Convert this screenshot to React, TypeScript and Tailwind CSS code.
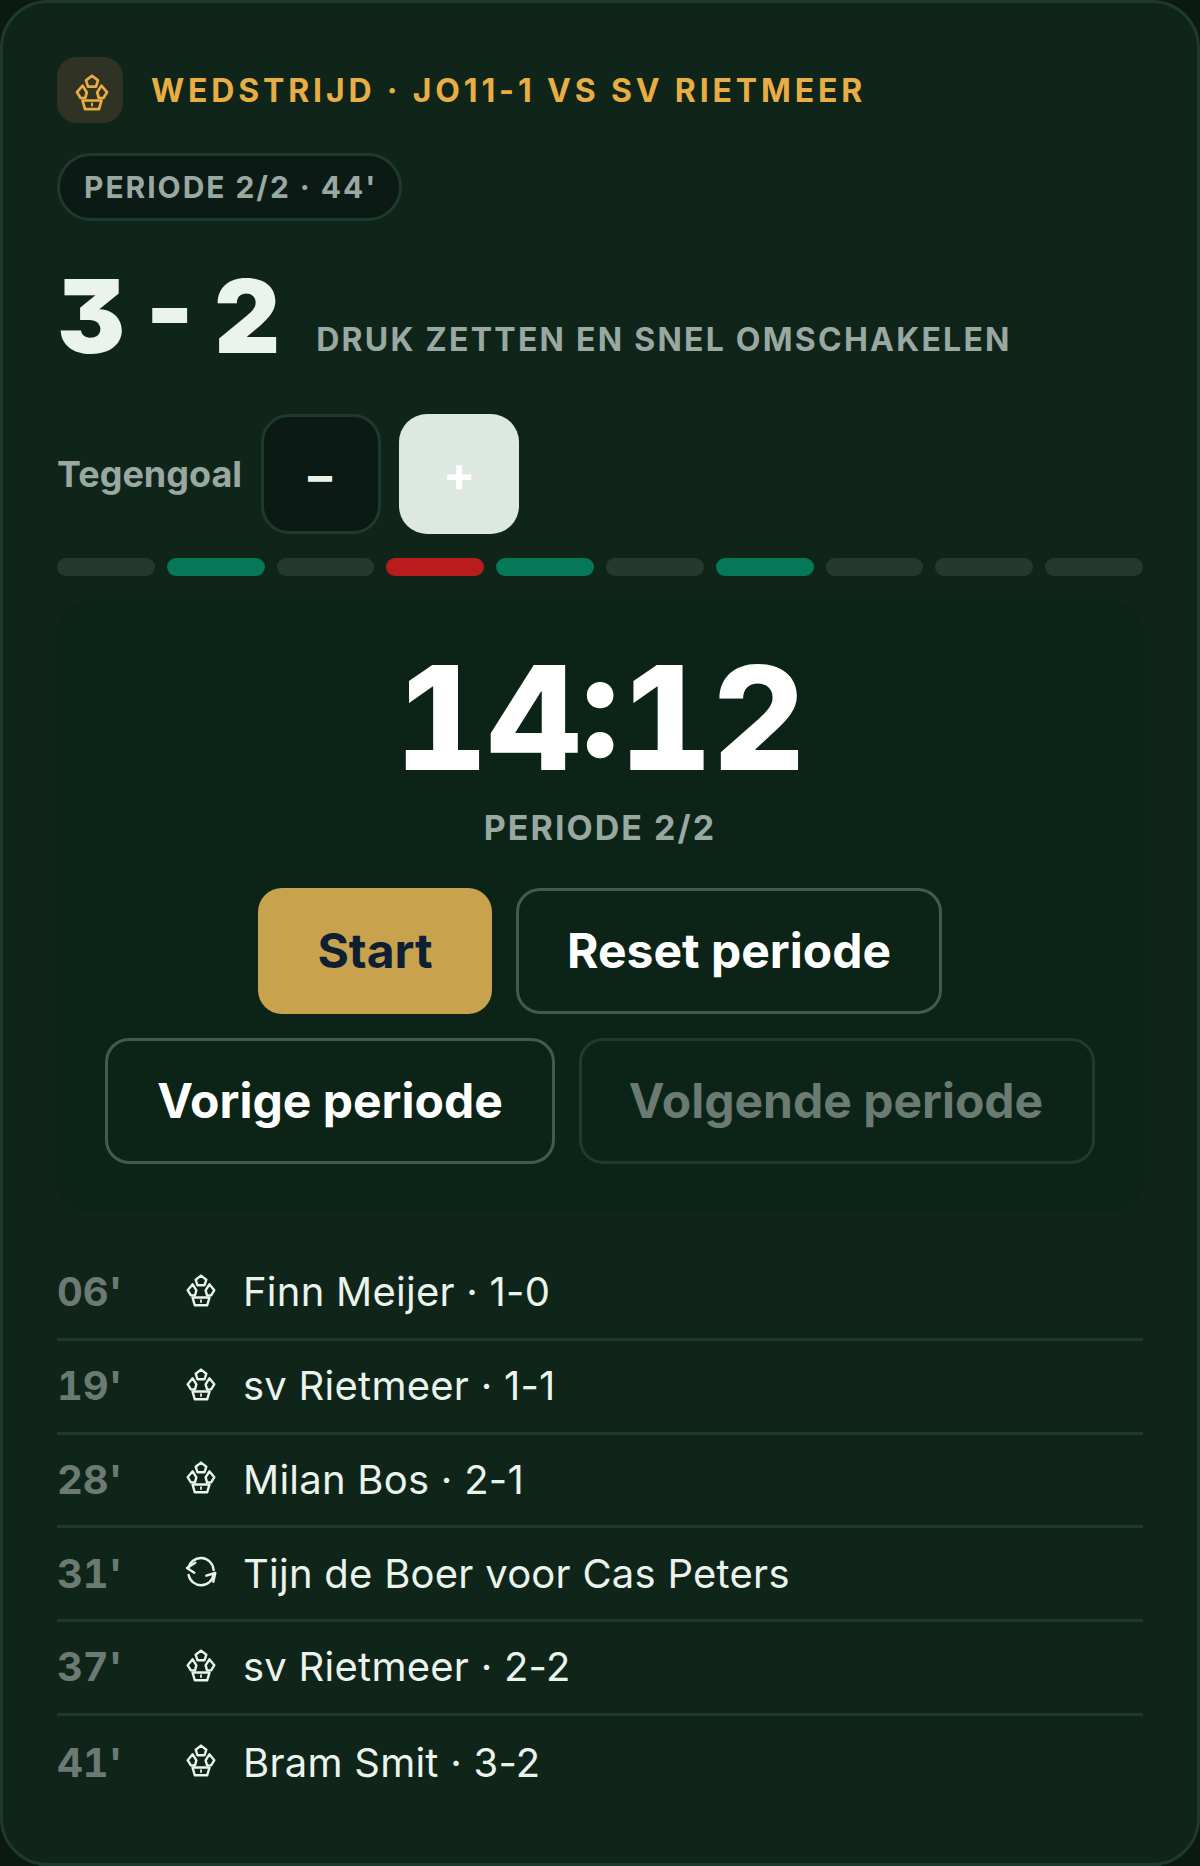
const Ball = ({ className }: { className: string }) => (
  <svg viewBox="0 0 36 38" fill="none" stroke="currentColor" strokeWidth="2.7" strokeLinejoin="round" strokeLinecap="round" className={className}>
    <path d="M18 2.8 24 7.4 22 13.6H14L12 7.4Z" />
    <path d="M8.6 12.6 12.8 19.5 11.2 25H6.6L3 19.2Z" />
    <path d="M27.4 12.6 23.2 19.5 24.8 25H29.4L33 19.2Z" />
    <path d="M8.5 27.5H15M21 27.5H27.5L25 36.2H11L8.5 27.5Z" />
    <path d="M18 30.5V32.5" strokeWidth="2" />
  </svg>
);

const Swap = ({ className }: { className: string }) => (
  <svg viewBox="0 0 32 32" fill="none" stroke="currentColor" strokeWidth="2.4" strokeLinejoin="round" strokeLinecap="round" className={className}>
    <path d="M3.4 12.6A12.7 12.7 0 0 1 28.6 14" />
    <path d="M28.6 18.5A12.7 12.7 0 0 1 3.6 19" />
    <path d="M10.3 6.7 2 12l7.3 4.7" />
    <path d="M21.3 19.7 30.3 17l-2 8.7" />
  </svg>
);

const bars = ["bg-[#243a30]", "bg-[#047857]", "bg-[#243a30]", "bg-[#b91c1c]", "bg-[#047857]", "bg-[#243a30]", "bg-[#047857]", "bg-[#243a30]", "bg-[#243a30]", "bg-[#243a30]"];

const events = [
  { t: "06'", e: "Finn Meijer · 1-0", swap: false },
  { t: "19'", e: "sv Rietmeer · 1-1", swap: false },
  { t: "28'", e: "Milan Bos · 2-1", swap: false },
  { t: "31'", e: "Tijn de Boer voor Cas Peters", swap: true },
  { t: "37'", e: "sv Rietmeer · 2-2", swap: false },
  { t: "41'", e: "Bram Smit · 3-2", swap: false },
];

export default function App() {
  return (
    <div className="w-[1200px] h-[1866px] bg-[#0a1a13] font-['Inter',sans-serif]">
      <div className="h-full rounded-[48px] border-[3px] border-[#1f3a2d] bg-[#0f251a] px-[54px] pt-[54px]">
        <div className="flex items-center gap-[28px] h-[66px]">
          <div className="w-[66px] h-[66px] rounded-[20px] bg-[#303323] flex items-center justify-center text-[#e8ae45]">
            <Ball className="w-[36px] h-[38px] mt-[3px] ml-[3px]" />
          </div>
          <div className="text-[32px] font-bold tracking-[3.84px] text-[#e8ae45] pt-[2px]">WEDSTRIJD · JO11-1 VS SV RIETMEER</div>
        </div>

        <div className="mt-[30px] inline-flex items-center h-[68px] pl-[24px] pr-[22px] rounded-full border-[3px] border-[#1f3a2d] bg-[#0b1a14] text-[30px] font-bold tracking-[1.95px] text-[#9aa8a2]">
          PERIODE 2/2 · 44'
        </div>

        <div className="mt-[35px] flex items-baseline gap-[36px] h-[120px]">
          <div className="text-[102px] leading-[120px] font-black text-[#eaf3ec] whitespace-nowrap [font-feature-settings:'cv09']">3 - 2</div>
          <div className="text-[32px] font-bold tracking-[2.24px] text-[#9aa8a2] -translate-y-[2px]">DRUK ZETTEN EN SNEL OMSCHAKELEN</div>
        </div>

        <div className="mt-[38px] flex items-center gap-[18px]">
          <div className="text-[36px] font-bold text-[#9aa8a2] w-[186px]">Tegengoal</div>
          <div className="w-[120px] h-[120px] rounded-[28px] border-[3px] border-[#1f3a2d] bg-[#0b1a14] flex items-center justify-center text-[48px] font-bold text-[#eaf3ec] pt-[3px] pr-[2px]">–</div>
          <div className="w-[120px] h-[120px] rounded-[28px] bg-[#dde8e0] flex items-center justify-center text-[48px] font-bold text-white">+</div>
        </div>

        <div className="mt-[24px] flex gap-[12px] h-[18px]">
          {bars.map((b, i) => (
            <div key={i} className={`flex-1 rounded-full ${b}`} />
          ))}
        </div>

        <div className="mt-[24px] h-[612px] rounded-[32px] bg-[#0c2317] flex flex-col items-center pt-[46px]">
          <div className="text-[144px] leading-[144px] font-extrabold text-white [font-variant-numeric:tabular-nums]">14:12</div>
          <div className="mt-[12px] text-[34px] font-bold tracking-[2.04px] text-[#9aa8a2]">PERIODE 2/2</div>
          <div className="mt-[35px] flex gap-[24px]">
            <div className="w-[234px] h-[126px] rounded-[24px] bg-[#c9a24d] text-[#0f1f33] text-[48px] font-bold flex items-center justify-center">Start</div>
            <div className="w-[426px] h-[126px] rounded-[24px] border-[3px] border-[#45594f] text-white text-[48px] font-bold flex items-center justify-center">Reset periode</div>
          </div>
          <div className="mt-[24px] flex gap-[24px]">
            <div className="w-[450px] h-[126px] rounded-[24px] border-[3px] border-[#45594f] text-white text-[48px] font-bold flex items-center justify-center">Vorige periode</div>
            <div className="w-[516px] h-[126px] rounded-[24px] border-[3px] border-[#24382e] text-[#6b7a72] text-[48px] font-bold flex items-center justify-center pr-[2px]">Volgende periode</div>
          </div>
        </div>

        <div className="mt-[35px]">
          {events.map((ev, i) => (
            <div key={i} className={`flex items-center h-[93.75px] ${i < 5 ? "border-b-[3px] border-[#1f3a2d]" : ""}`}>
              <div className="w-[126px] text-[40px] font-bold text-[#6b7a73] [font-variant-numeric:tabular-nums]">{ev.t}</div>
              <div className="w-[60px] flex justify-start">
                {ev.swap ? <Swap className="w-[32px] h-[32px] text-[#eaf3ec] mb-[4px] ml-[2px]" /> : <Ball className="w-[32px] h-[34px] text-[#eaf3ec] mb-[5px] ml-[1.5px]" />}
              </div>
              <div className="text-[40px] tracking-[0.25px] text-[#eaf3ec]">{ev.e}</div>
            </div>
          ))}
        </div>
      </div>
    </div>
  );
}
